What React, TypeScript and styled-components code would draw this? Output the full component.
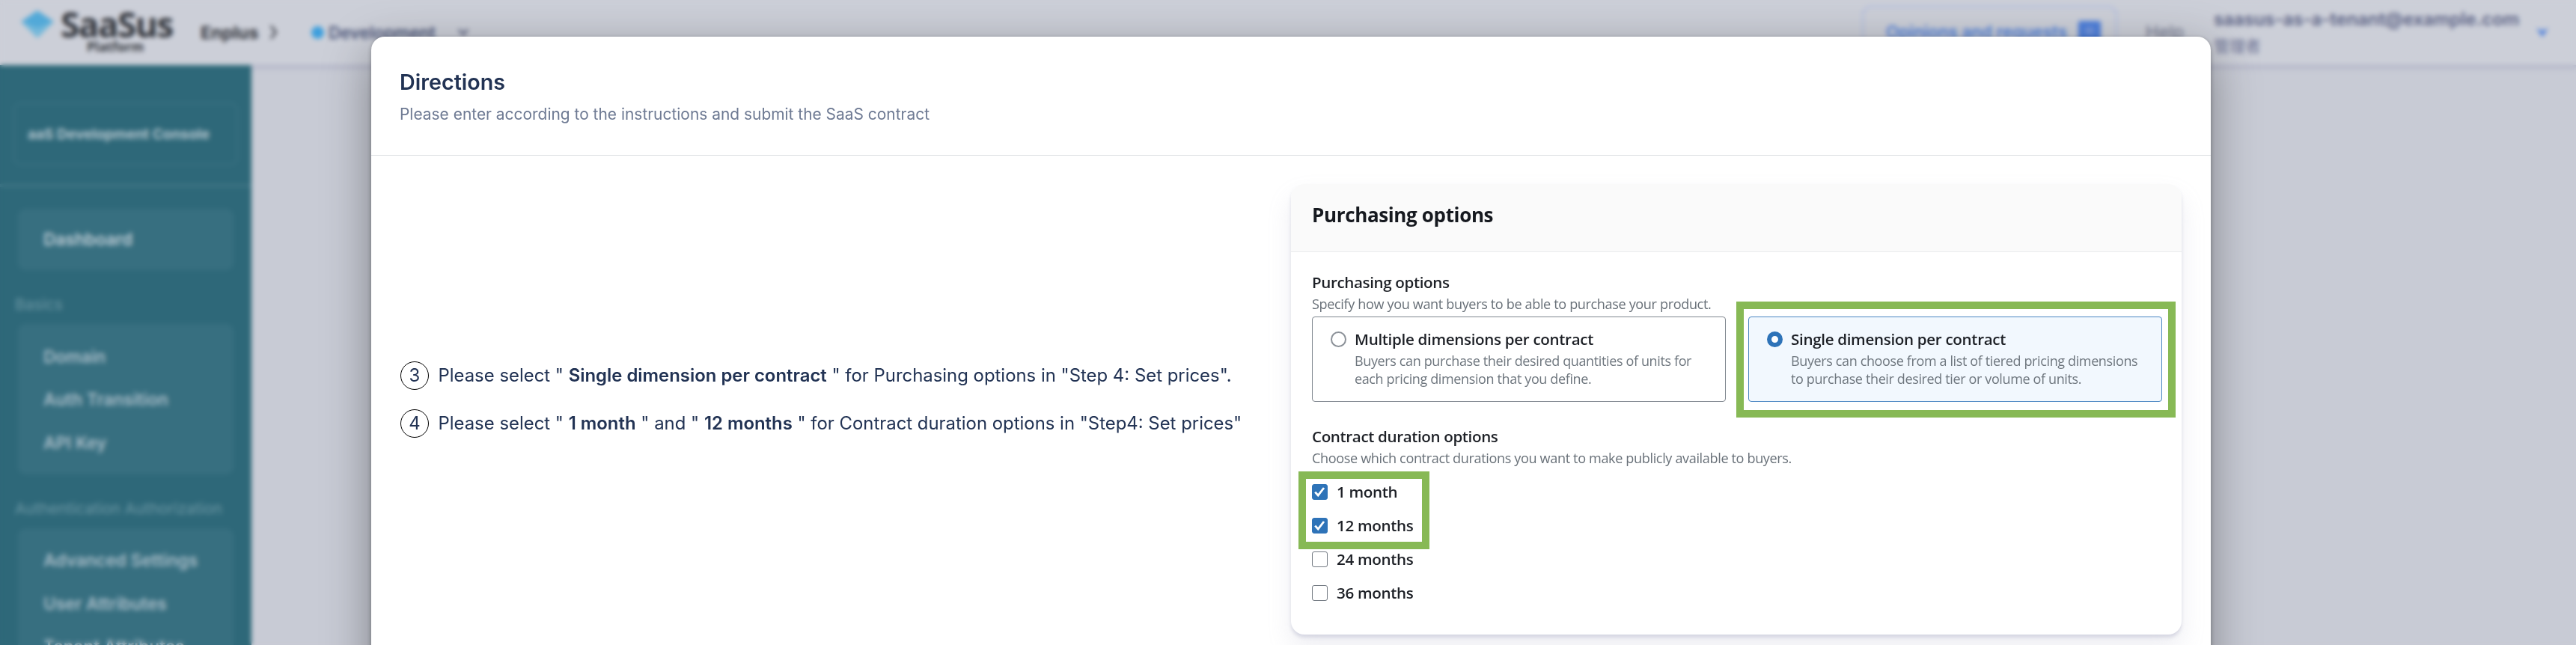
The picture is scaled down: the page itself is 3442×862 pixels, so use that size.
import React from "react";
import styled, { createGlobalStyle } from "styled-components";

const inter = `Inter, "Noto Sans CJK JP", sans-serif`;
const humanist = `"Open Sans", "Noto Sans", sans-serif`;

const GlobalStyle = createGlobalStyle`
  *, *::before, *::after { box-sizing: border-box; }
  body { margin: 0; overflow: hidden; }
  h1, h2, h3, p, ul, ol { margin: 0; padding: 0; }
  ul, ol { list-style: none; }
`;

const Screen = styled.div`
  position: relative;
  width: 100%;
  height: 862px;
  overflow: hidden;
  background: #c8cbd5;
  font-family: ${inter};
  white-space: nowrap;
`;

/* ---------- console behind the dialog ---------- */

const TopBar = styled.header`
  position: relative;
  display: flex;
  align-items: flex-start;
  height: 87px;
  padding: 0 36px 0 28px;
  background: #cccfd8;
  box-shadow: 0 4px 6px rgba(159, 162, 191, 0.4), 0 2px 2px rgba(159, 162, 191, 0.5);
`;

const LogoMark = styled.svg`
  width: 44px;
  height: 37px;
  margin-top: 14px;
`;

const Brand = styled.div`
  width: 187px;
  margin-left: 9px;
  padding-top: 11px;
  font-family: ${humanist};
  font-weight: 700;
  color: #33363d;
`;

const BrandName = styled.div`
  font-size: 46px;
  line-height: 43px;
  letter-spacing: -1.6px;
`;

const BrandSub = styled.div`
  padding-left: 35px;
  font-size: 17.3px;
  line-height: 18px;
`;

const Crumbs = styled.div`
  display: flex;
  align-items: center;
  height: 30px;
  margin-top: 28px;
`;

const Tenant = styled.span`
  width: 92px;
  font-size: 23.4px;
  font-weight: 700;
  color: #33363d;
`;

const EnvDot = styled.span`
  width: 17px;
  height: 17px;
  margin: 0 6px 0 45px;
  border-radius: 50%;
  background: #3d9fdd;
`;

const EnvName = styled.span`
  width: 172px;
  font-size: 22.3px;
  font-weight: 600;
  color: #4a5478;
`;

const Account = styled.div`
  display: flex;
  align-items: flex-start;
  margin-left: auto;
`;

const FeedbackButton = styled.div`
  display: flex;
  align-items: center;
  width: 341px;
  height: 68px;
  margin-top: 8px;
  padding-left: 30px;
  border: 2px solid #b0bce0;
  border-radius: 12px;
  font-size: 22.3px;
  font-weight: 600;
  color: #4d7fdb;

  svg {
    margin-left: 15px;
  }
`;

const HelpLink = styled.span`
  width: 91px;
  margin: 28px 0 0 38px;
  font-size: 23.4px;
  line-height: 30px;
  color: #6f748c;
`;

const Identity = styled.div`
  width: 430px;
  padding-top: 10px;
  font-size: 23.9px;
  font-weight: 600;
  line-height: 32px;
  color: #5a6184;
`;

const Role = styled.div`
  margin-top: 3px;
  font-size: 21px;
  font-weight: 400;
  line-height: 34px;
  color: #6b7194;
`;

const AccountArrow = styled.svg`
  margin-top: 36px;
`;

const SideNav = styled.nav`
  position: relative;
  width: 336px;
  height: 775px;
  padding-top: 50px;
  overflow: hidden;
  background: #2e6879;
`;

const ConsoleBadge = styled.div`
  width: 300px;
  height: 84px;
  margin-left: 18px;
  padding-left: 17px;
  border: 2px solid #3a7283;
  border-radius: 10px;
  font-size: 19px;
  font-weight: 700;
  line-height: 82px;
  color: #b4c5ce;
`;

const NavDivider = styled.div`
  height: 4px;
  margin: 25px 0 29px;
  background: #3f7585;
`;

const NavHeading = styled.h3`
  margin: 33px 0 13px 20px;
  font-size: 20.6px;
  font-weight: 400;
  line-height: 26px;
  color: #6c97a4;
`;

const NavGroup = styled.ul<{ $top: number; $bottom: number }>`
  width: 288px;
  margin-left: 24px;
  padding: ${(p) => p.$top}px 0 ${(p) => p.$bottom}px 34px;
  border-radius: 10px;
  background: #376f80;
`;

const NavItem = styled.li<{ $active?: boolean }>`
  height: 57.5px;
  font-size: 22.6px;
  font-weight: 600;
  line-height: 57.5px;
  color: ${(p) => (p.$active ? "#c0ced7" : "#a9bdc8")};
`;

const Backdrop = styled.div`
  position: absolute;
  inset: 0;
  padding: 49px 488px 0 496px;
  backdrop-filter: blur(3px);
`;

/* ---------- dialog ---------- */

const Dialog = styled.section`
  height: 900px;
  border-radius: 18px;
  background: #fff;
  box-shadow: 0 2px 6px rgba(0, 0, 0, 0.3), 0 20px 64px rgba(0, 0, 0, 0.37);
`;

const DialogHead = styled.header`
  height: 159px;
  padding: 43px 38px 0;
  border-bottom: 1px solid #dcdfe2;
`;

const DialogTitle = styled.h1`
  font-size: 28.7px;
  font-weight: 600;
  line-height: 35px;
  color: #223354;
`;

const DialogLead = styled.p`
  margin-top: 11px;
  font-size: 20.93px;
  line-height: 30px;
  color: #6e7a93;
`;

const DialogBody = styled.div`
  display: flex;
  align-items: flex-start;
  justify-content: space-between;
  padding: 38px 39px 0;
`;

const Steps = styled.ol`
  display: flex;
  flex-direction: column;
  gap: 26px;
  padding-top: 237px;
`;

const Step = styled.li`
  display: flex;
  height: 38px;
  font-size: 23.9px;
  line-height: 37px;
  color: #223354;

  b {
    font-weight: 600;
  }
`;

const StepNumber = styled.span`
  width: 38px;
  height: 38px;
  margin-right: 12.5px;
  border: 1px solid #000;
  border-radius: 50%;
  line-height: 35px;
  text-align: center;
`;

/* ---------- purchasing options card ---------- */

const Card = styled.section`
  width: 1190px;
  height: 602px;
  border-radius: 18px;
  background: #fff;
  box-shadow: 0 18px 32px rgba(159, 162, 191, 0.18), 0 4px 4px rgba(159, 162, 191, 0.32);
  font-family: ${humanist};
`;

const CardHead = styled.header`
  height: 91px;
  padding: 23px 28px 0;
  border-bottom: 1px solid #e9ebed;
  border-radius: 18px 18px 0 0;
  background: #fafafa;
`;

const CardTitle = styled.h2`
  font-size: 26px;
  font-weight: 700;
  line-height: 36px;
  letter-spacing: -0.36px;
  color: #16191f;
`;

const Field = styled.div<{ $gap: number }>`
  padding: ${(p) => p.$gap}px 26px 0 28px;
`;

const FieldLabel = styled.h3`
  font-size: 20.6px;
  font-weight: 560;
  line-height: 28px;
  letter-spacing: -0.38px;
  color: #1d2026;
`;

const FieldHint = styled.p`
  margin-top: 1px;
  font-size: 18.1px;
  font-weight: 480;
  line-height: 28px;
  letter-spacing: -0.37px;
  color: #687078;
`;

const Tiles = styled.div`
  display: grid;
  grid-template-columns: 1fr 1fr;
  gap: 30px;
  margin-top: 3px;
`;

const Tile = styled.div<{ $selected?: boolean }>`
  position: relative;
  display: flex;
  height: 114px;
  padding: 16px 0 0 24px;
  border: 1.5px solid ${(p) => (p.$selected ? "#4a86c2" : "#7f868e")};
  border-radius: 4px;
  background: ${(p) => (p.$selected ? "#f2f8fe" : "#fff")};
`;

const Radio = styled.span<{ $selected?: boolean }>`
  width: 21px;
  height: 21px;
  margin: 3px 11px 0 0;
  border: ${(p) => (p.$selected ? "6.5px solid #2e73b8" : "2px solid #8b9198")};
  border-radius: 50%;
  background: #fff;
`;

const TileLabel = styled.div`
  font-size: 20.6px;
  font-weight: 560;
  line-height: 26px;
  letter-spacing: -0.33px;
  color: #1d2026;
`;

const TileText = styled.p`
  margin-top: 4px;
  font-size: 18px;
  font-weight: 480;
  line-height: 24.4px;
  letter-spacing: -0.37px;
  color: #6e767e;
`;

const Highlight = styled.span<{ $inset: string }>`
  position: absolute;
  inset: ${(p) => p.$inset};
  border: 10px solid #87b955;
  pointer-events: none;
`;

const Durations = styled.ul`
  display: flex;
  flex-direction: column;
  gap: 24px;
  margin-top: 21px;
`;

const DurationGroup = styled.div`
  position: relative;
  display: flex;
  flex-direction: column;
  gap: 24px;
  width: 135px;
`;

const Duration = styled.li`
  display: flex;
  height: 21px;
  font-size: 20.6px;
  font-weight: 560;
  line-height: 21px;
  letter-spacing: -0.34px;
  color: #1d2026;
`;

const Box = styled.span<{ $checked: boolean }>`
  display: flex;
  width: 21px;
  height: 21px;
  margin-right: 12px;
  border: 1.5px solid ${(p) => (p.$checked ? "#2e73b8" : "#747b83")};
  border-radius: 3px;
  background: ${(p) => (p.$checked ? "#2e73b8" : "#fff")};
`;

function DurationOption({ label, checked = false }: { label: string; checked?: boolean }) {
  return (
    <Duration>
      <Box $checked={checked}>
        {checked && (
          <svg width="19" height="19" viewBox="0 0 19 19" fill="none">
            <path d="M3.2 9.6 7.2 14 15 4" stroke="#fff" strokeWidth="2.8" />
          </svg>
        )}
      </Box>
      {label}
    </Duration>
  );
}

function Chevron({ down = false, color }: { down?: boolean; color: string }) {
  return down ? (
    <svg width="16" height="12" viewBox="0 0 16 12" fill="none">
      <path d="M2 2.5 8 9 14 2.5" stroke={color} strokeWidth="3" />
    </svg>
  ) : (
    <svg width="11" height="20" viewBox="0 0 11 20" fill="none">
      <path d="M2 1.5 8.5 10 2 18.5" stroke={color} strokeWidth="3" />
    </svg>
  );
}

export default function App() {
  return (
    <Screen>
      <GlobalStyle />
      <TopBar>
        <LogoMark viewBox="0 0 44 37">
          <path d="M22 0 44 15 22 24 0 15Z" fill="#52a9d8" />
          <path d="M0 15 22 24 44 15 22 37Z" fill="#74b8da" />
        </LogoMark>
        <Brand>
          <BrandName>SaaSus</BrandName>
          <BrandSub>Platform</BrandSub>
        </Brand>
        <Crumbs>
          <Tenant>Enplus</Tenant>
          <Chevron color="#4a4d56" />
          <EnvDot />
          <EnvName>Development</EnvName>
          <Chevron down color="#5b6280" />
        </Crumbs>
        <Account>
          <FeedbackButton>
            Opinions and requests
            <svg width="30" height="28" viewBox="0 0 30 28">
              <path d="M2 0h26a2 2 0 0 1 2 2v24a2 2 0 0 1-2 2H2a2 2 0 0 1-2-2V2a2 2 0 0 1 2-2Z" fill="#4d7fdb" />
              <path d="M9 8h12v10H9Z" fill="#7094dd" />
            </svg>
          </FeedbackButton>
          <HelpLink>Help</HelpLink>
          <Identity>
            saasus-as-a-tenant@example.com
            <Role>管理者</Role>
          </Identity>
          <AccountArrow width="18" height="14" viewBox="0 0 18 14">
            <path d="M1 1.5 9 5 17 1.5 9 13.5Z" fill="#4d7fdb" />
          </AccountArrow>
        </Account>
      </TopBar>

      <SideNav>
        <ConsoleBadge>aaS Development Console</ConsoleBadge>
        <NavDivider />
        <NavGroup $top={12} $bottom={12}>
          <NavItem $active>Dashboard</NavItem>
        </NavGroup>
        <NavHeading>Basics</NavHeading>
        <NavGroup $top={15} $bottom={14}>
          <NavItem>Domain</NavItem>
          <NavItem>Auth Transition</NavItem>
          <NavItem>API Key</NavItem>
        </NavGroup>
        <NavHeading>Authentication Authorization</NavHeading>
        <NavGroup $top={14} $bottom={14}>
          <NavItem>Advanced Settings</NavItem>
          <NavItem>User Attributes</NavItem>
          <NavItem>Tenant Attributes</NavItem>
        </NavGroup>
      </SideNav>

      <Backdrop>
        <Dialog>
          <DialogHead>
            <DialogTitle>Directions</DialogTitle>
            <DialogLead>
              Please enter according to the instructions and submit the SaaS contract
            </DialogLead>
          </DialogHead>
          <DialogBody>
            <Steps>
              <Step>
                <StepNumber>3</StepNumber>
                <p>
                  Please select " <b>Single dimension per contract</b> " for Purchasing options in
                  "Step 4: Set prices".
                </p>
              </Step>
              <Step>
                <StepNumber>4</StepNumber>
                <p>
                  Please select " <b>1 month</b> " and " <b>12 months</b> " for Contract duration
                  options in "Step4: Set prices"
                </p>
              </Step>
            </Steps>

            <Card>
              <CardHead>
                <CardTitle>Purchasing options</CardTitle>
              </CardHead>
              <Field $gap={26}>
                <FieldLabel>Purchasing options</FieldLabel>
                <FieldHint>Specify how you want buyers to be able to purchase your product.</FieldHint>
                <Tiles>
                  <Tile>
                    <Radio />
                    <div>
                      <TileLabel>Multiple dimensions per contract</TileLabel>
                      <TileText>
                        Buyers can purchase their desired quantities of units for
                        <br />
                        each pricing dimension that you define.
                      </TileText>
                    </div>
                  </Tile>
                  <Tile $selected>
                    <Radio $selected />
                    <div>
                      <TileLabel>Single dimension per contract</TileLabel>
                      <TileText>
                        Buyers can choose from a list of tiered pricing dimensions
                        <br />
                        to purchase their desired tier or volume of units.
                      </TileText>
                    </div>
                    <Highlight $inset="-21px -19px -22px -17px" />
                  </Tile>
                </Tiles>
              </Field>
              <Field $gap={32}>
                <FieldLabel>Contract duration options</FieldLabel>
                <FieldHint>
                  Choose which contract durations you want to make publicly available to buyers.
                </FieldHint>
                <Durations>
                  <DurationGroup>
                    <DurationOption label="1 month" checked />
                    <DurationOption label="12 months" checked />
                    <Highlight $inset="-17px -22px -21px -18px" />
                  </DurationGroup>
                  <DurationOption label="24 months" />
                  <DurationOption label="36 months" />
                </Durations>
              </Field>
            </Card>
          </DialogBody>
        </Dialog>
      </Backdrop>
    </Screen>
  );
}
